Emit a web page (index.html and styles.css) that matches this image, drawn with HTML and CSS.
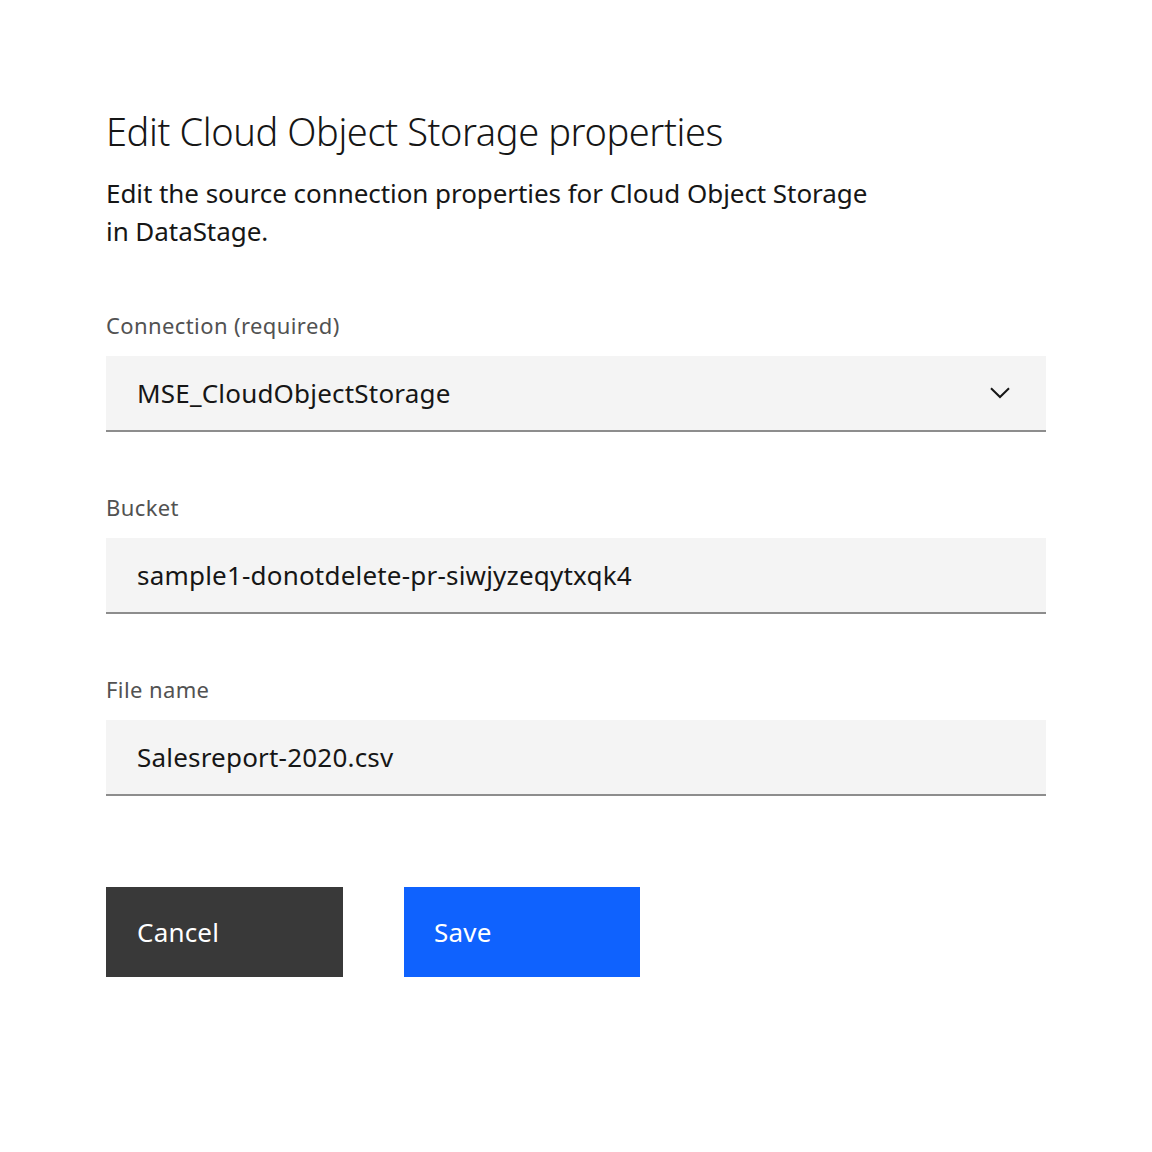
FILE: index.html
```html
<!DOCTYPE html>
<html lang="en">
<head>
<meta charset="utf-8">
<title>Edit Cloud Object Storage properties</title>
<link rel="stylesheet" href="styles.css">
</head>
<body>
<main class="modal">
  <h1 class="title">Edit Cloud Object Storage properties</h1>
  <p class="desc">Edit the source connection properties for Cloud Object Storage in DataStage.</p>

  <div class="group">
    <label class="label">Connection (required)</label>
    <div class="field select">
      <span class="value">MSE_CloudObjectStorage</span>
      <svg class="chevron" width="20" height="12" viewBox="0 0 20 12" aria-hidden="true">
        <path d="M1 1.2 L10 10 L19 1.2" fill="none" stroke="#161616" stroke-width="2"/>
      </svg>
    </div>
  </div>

  <div class="group">
    <label class="label">Bucket</label>
    <div class="field"><span class="value">sample1-donotdelete-pr-siwjyzeqytxqk4</span></div>
  </div>

  <div class="group">
    <label class="label">File name</label>
    <div class="field"><span class="value">Salesreport-2020.csv</span></div>
  </div>

  <div class="actions">
    <button class="btn btn-secondary">Cancel</button>
    <button class="btn btn-primary">Save</button>
  </div>
</main>
</body>
</html>
```
FILE: styles.css
```css
html, body {
  margin: 0;
  padding: 0;
  background: #ffffff;
}

body {
  font-family: "Noto Sans", "DejaVu Sans", sans-serif;
  color: #161616;
}

.modal {
  width: 940px;
  padding: 107px 106px 0;
  display: flex;
  flex-direction: column;
}

.title {
  margin: 0;
  font-size: 38px;
  font-weight: 300;
  line-height: 48px;
  letter-spacing: -0.4px;
  color: #161616;
}

.desc {
  margin: 19px 0 0;
  max-width: 780px;
  font-size: 26px;
  font-weight: 400;
  line-height: 38px;
  letter-spacing: -0.06px;
  color: #161616;
}

.group {
  margin-top: 61px;
  display: flex;
  flex-direction: column;
  gap: 17px;
}

.label {
  font-size: 22px;
  line-height: 28px;
  letter-spacing: 0.4px;
  color: #525252;
}

.field {
  box-sizing: border-box;
  height: 76px;
  background: #f4f4f4;
  border-bottom: 2px solid #8d8d8d;
  display: flex;
  align-items: center;
  justify-content: space-between;
  padding: 0 36px 0 31px;
}

.value {
  font-size: 26px;
  line-height: 38px;
  letter-spacing: 0.2px;
  color: #161616;
}

.chevron {
  display: block;
  flex: none;
}

.actions {
  margin-top: 91px;
  display: flex;
  gap: 61px;
}

.btn {
  box-sizing: border-box;
  width: 237px;
  height: 90px;
  border: none;
  padding: 0 31px;
  text-align: left;
  font-family: "Noto Sans", "DejaVu Sans", sans-serif;
  font-size: 26px;
  line-height: 38px;
  letter-spacing: 0.2px;
  color: #ffffff;
  cursor: pointer;
}

.btn-secondary {
  background: #393939;
}

.btn-primary {
  background: #0f62fe;
  padding-left: 30px;
  width: 236px;
}
```
